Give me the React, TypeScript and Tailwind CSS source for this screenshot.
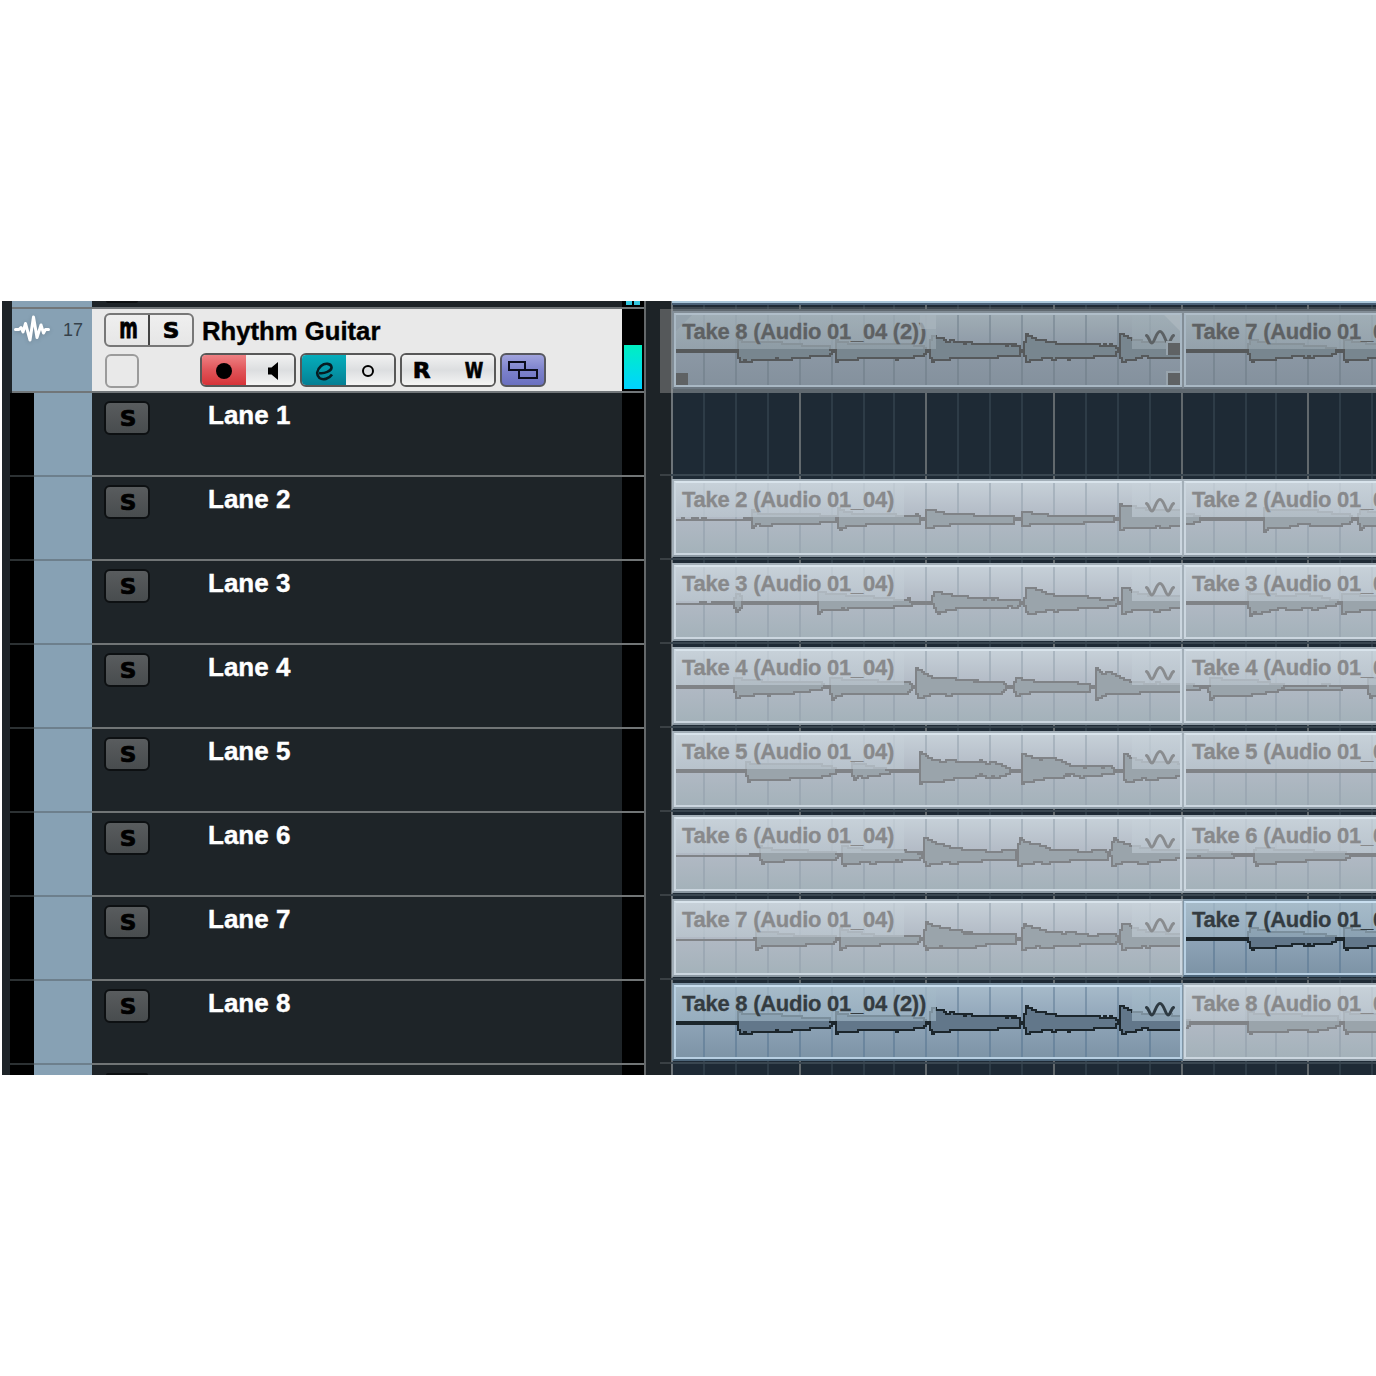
import React from 'react';
import clsx from 'clsx';

type Tone = 'muted' | 'active' | 'track';

interface Wave {
  top: string;
  bottom: string;
}

interface Clip {
  label: string;
  tone: Tone;
  wave: Wave;
}

interface LaneData {
  name: string;
  clips: Clip[];
}

const GRID = [
  704, 736, 768, 800, 832, 864, 894, 926, 958, 990, 1022, 1054, 1086, 1118, 1150, 1182, 1214, 1246, 1276, 1308, 1340,
  1372,
];
const MAJOR = [800, 926, 1054, 1182, 1308];

// Envelope points are "x,level" pairs, level is the distance from the centre line
const take2a: Wave = {
  top: '676,-1 680,-1 681,1 683,-1 690,-1 692,1 696,1 698,-1 704,1 706,-1 742,-1 744,1 750,1 752,8 756,6 786,5 818,4 834,3 835,1 837,1 838,10 842,8 850,6 886,5 904,3 914,3 916,5 918,3 920,1 924,1 926,9 934,9 935,7 943,7 944,5 973,5 974,3 1012,3 1013,1 1020,1 1022,7 1030,7 1031,5 1047,5 1048,3 1112,3 1113,1 1118,1 1120,15 1123,13 1132,13 1134,12 1150,9 1180,8',
  bottom:
    '676,1 750,1 752,9 754,7 757,5 762,7 769,7 771,5 818,5 819,3 834,3 835,1 836,1 838,9 840,11 842,9 846,7 864,7 865,5 918,5 920,1 924,1 926,9 932,9 933,7 948,7 949,5 1013,5 1014,1 1020,1 1022,7 1029,7 1030,5 1082,5 1083,3 1112,3 1113,1 1118,1 1120,11 1123,11 1124,9 1154,9 1156,7 1159,7 1161,9 1168,9 1170,7 1180,7',
};
const take2b: Wave = {
  top: '1186,5 1192,4 1196,3 1200,1 1263,1 1264,10 1270,9 1310,9 1330,6 1348,4 1351,1 1357,1 1359,9 1376,7',
  bottom:
    '1186,5 1190,5 1196,3 1200,1 1262,1 1264,13 1267,9 1288,9 1290,7 1296,7 1298,5 1309,5 1311,7 1339,7 1341,5 1349,5 1351,1 1357,1 1359,9 1361,11 1363,7 1376,7',
};
const take3a: Wave = {
  top: '676,-1 698,-1 700,1 703,1 705,-1 710,-1 714,1 732,1 735,8 738,8 741,5 742,1 816,1 818,11 830,9 860,7 884,5 903,3 907,3 909,5 910,1 930,1 934,11 940,11 943,9 949,9 951,7 965,7 967,5 981,5 984,3 988,5 992,3 995,5 999,3 1016,3 1020,1 1023,1 1026,15 1031,15 1043,11 1046,9 1060,7 1084,7 1088,5 1096,5 1100,3 1112,3 1115,7 1117,1 1120,1 1122,15 1128,15 1131,11 1146,8 1180,7',
  bottom:
    '676,1 733,1 735,9 738,7 741,4 742,1 816,1 818,11 822,7 840,7 842,5 845,7 847,5 885,5 900,3 909,3 911,1 932,1 935,7 937,11 941,9 950,7 960,5 1005,5 1007,3 1016,5 1020,1 1023,1 1026,9 1029,11 1042,9 1046,7 1052,7 1055,9 1058,7 1076,7 1079,5 1103,5 1112,3 1116,1 1120,1 1122,11 1128,9 1133,7 1150,7 1156,9 1162,7 1176,5 1180,3',
};
const take3b: Wave = {
  top: '1186,1 1247,1 1248,10 1274,8 1290,7 1300,9 1316,7 1334,3 1338,1 1340,1 1342,9 1376,7',
  bottom:
    '1186,1 1247,1 1250,13 1253,9 1258,11 1263,9 1274,7 1280,5 1290,7 1310,5 1314,7 1318,5 1333,3 1338,1 1340,1 1342,11 1346,9 1358,9 1360,7 1376,7',
};
const take4a: Wave = {
  top: '676,1 732,1 733,10 740,8 760,6 820,5 823,1 828,1 830,9 850,7 903,5 906,5 907,7 910,3 912,1 914,1 916,18 920,16 927,12 933,9 953,9 955,7 972,7 974,5 976,7 978,5 1003,5 1005,1 1013,1 1015,9 1020,9 1023,7 1032,7 1033,5 1076,5 1078,3 1088,3 1090,1 1094,1 1096,19 1099,15 1104,13 1108,15 1112,13 1116,11 1124,7 1132,5 1154,3 1156,5 1160,3 1180,3',
  bottom:
    '676,1 732,1 734,5 737,13 740,9 752,9 755,7 766,7 768,9 770,7 788,7 797,5 820,3 823,1 828,1 830,7 832,13 835,9 840,9 842,7 907,7 910,3 912,1 914,1 917,11 921,11 926,9 933,7 943,7 946,9 949,9 951,7 1000,7 1003,5 1005,1 1013,1 1015,9 1018,9 1020,7 1024,7 1033,5 1088,5 1089,1 1094,1 1096,13 1099,11 1104,9 1107,7 1139,7 1140,5 1180,5',
};
const take4b: Wave = {
  top: '1186,3 1199,1 1208,1 1210,9 1233,7 1256,6 1276,3 1290,1 1320,1 1321,3 1323,1 1328,3 1330,1 1367,1 1368,9 1376,8',
  bottom:
    '1186,3 1198,3 1201,1 1207,1 1210,13 1214,9 1249,9 1251,7 1262,7 1266,5 1274,5 1279,3 1282,1 1284,3 1340,3 1342,1 1367,1 1369,11 1372,9 1376,9',
};
const take5a: Wave = {
  top: '676,1 730,1 731,-1 733,1 744,1 746,9 752,7 783,6 820,6 830,4 837,1 851,1 852,8 860,7 873,4 890,1 918,1 920,19 923,17 928,13 933,11 943,9 948,11 952,11 956,9 976,8 980,11 986,7 992,9 997,7 1003,5 1010,1 1020,1 1022,17 1026,15 1036,13 1040,11 1043,13 1050,13 1058,11 1066,7 1071,5 1082,5 1084,3 1087,5 1099,5 1102,3 1106,5 1110,5 1112,3 1114,1 1122,1 1124,17 1128,15 1131,13 1141,10 1173,9 1180,7',
  bottom:
    '676,1 744,1 746,5 748,11 751,9 787,9 789,7 815,7 827,5 837,1 851,1 853,9 856,7 859,5 862,7 873,5 886,3 890,1 918,1 920,13 923,11 933,11 952,9 954,7 973,7 980,3 984,5 988,7 992,5 996,7 1003,5 1010,1 1020,1 1022,13 1025,11 1040,9 1044,7 1062,7 1064,5 1066,3 1068,5 1070,3 1078,5 1081,7 1083,5 1099,5 1101,3 1112,3 1114,1 1122,1 1124,9 1128,11 1139,9 1144,7 1147,9 1156,9 1159,7 1173,7 1180,3',
};
const take5b: Wave = { top: '1186,1 1376,1', bottom: '1186,1 1376,1' };
const take6a: Wave = {
  top: '676,-1 748,-1 750,1 752,-1 755,1 758,1 760,8 770,6 783,5 832,3 836,1 840,1 841,10 847,8 860,6 870,5 904,5 906,3 911,3 913,1 915,3 918,1 920,3 922,1 924,17 930,15 937,11 948,9 950,7 960,7 962,5 983,5 985,3 1001,3 1003,5 1014,5 1016,1 1019,17 1024,13 1033,11 1043,9 1050,5 1076,5 1077,3 1090,3 1091,5 1105,5 1108,1 1110,5 1113,17 1119,13 1126,11 1132,9 1150,6 1180,5',
  bottom:
    '676,1 758,1 760,5 761,11 764,7 782,7 783,5 831,5 833,3 835,5 838,1 840,1 842,9 843,11 846,9 857,9 860,7 868,7 872,9 877,7 893,7 896,5 899,7 902,5 919,5 922,1 924,7 926,11 930,9 940,9 943,7 954,9 960,7 980,7 981,5 1014,5 1016,1 1018,11 1023,9 1030,9 1034,7 1048,9 1050,7 1068,7 1069,5 1106,5 1108,1 1110,1 1112,11 1117,9 1123,7 1134,7 1139,9 1145,9 1147,7 1158,7 1160,5 1169,5 1180,3',
};
const take6b: Wave = {
  top: '1186,5 1206,4 1226,3 1236,1 1253,1 1255,8 1263,7 1283,5 1344,3 1347,1 1376,1',
  bottom:
    '1186,3 1196,3 1198,1 1200,3 1229,3 1235,1 1253,1 1255,11 1258,9 1273,9 1275,7 1303,7 1305,5 1344,5 1347,3 1349,1 1376,1',
};
const take7a: Wave = {
  top: '676,-1 752,-1 753,1 755,1 756,8 776,6 793,4 833,3 835,1 839,1 840,10 847,8 860,6 873,4 904,3 917,3 919,1 923,1 925,17 930,14 942,11 956,9 960,9 962,7 964,5 966,7 968,5 970,7 973,5 1015,5 1016,1 1020,1 1023,15 1028,13 1039,10 1049,7 1060,7 1062,5 1069,7 1079,5 1086,5 1089,3 1096,3 1098,5 1115,5 1117,1 1119,1 1121,15 1127,15 1132,11 1136,10 1150,7 1180,5',
  bottom:
    '676,1 754,1 756,11 759,9 762,7 805,7 806,5 833,5 835,1 838,1 840,11 843,9 846,7 878,7 879,5 917,5 919,1 923,1 925,13 928,9 938,9 941,7 943,9 973,9 975,7 983,7 985,5 1015,5 1016,1 1020,1 1022,11 1026,9 1034,9 1037,7 1040,9 1052,9 1055,7 1078,7 1079,5 1115,5 1117,1 1119,1 1122,11 1126,9 1139,9 1141,7 1148,9 1151,7 1180,7',
};
const take7b: Wave = {
  top: '1186,1 1247,1 1249,12 1256,10 1261,9 1274,7 1303,6 1318,5 1333,3 1337,1 1342,1 1344,12 1353,9 1376,7',
  bottom:
    '1186,1 1247,1 1250,9 1252,11 1255,9 1273,9 1275,7 1290,7 1292,5 1301,5 1304,7 1308,5 1312,7 1315,5 1329,5 1334,3 1337,1 1342,1 1345,13 1348,9 1366,9 1368,7 1376,7',
};
const take8a: Wave = {
  top: '676,1 737,1 738,11 744,9 780,8 800,6 828,5 830,1 835,1 836,10 847,8 880,7 912,6 921,5 925,1 928,1 931,15 935,15 937,12 943,12 947,9 951,11 955,9 961,9 963,7 969,9 972,7 1003,7 1005,5 1009,7 1011,5 1014,7 1016,5 1018,5 1020,1 1023,1 1025,17 1030,15 1033,13 1038,11 1053,9 1055,7 1065,7 1067,5 1069,7 1098,7 1101,5 1104,7 1107,5 1110,7 1112,5 1115,5 1117,1 1118,1 1120,17 1125,15 1131,12 1140,10 1163,9 1180,7',
  bottom:
    '676,1 737,1 738,7 741,13 743,9 748,11 752,9 773,9 776,7 780,9 789,9 791,7 807,7 809,5 828,5 831,1 834,1 836,11 839,9 855,9 857,7 894,7 896,9 898,7 912,7 914,5 923,5 925,1 928,1 931,11 935,9 948,9 949,7 997,7 998,5 1018,5 1020,1 1023,1 1026,11 1030,9 1040,9 1042,7 1050,7 1052,9 1056,7 1066,7 1068,9 1071,7 1092,7 1093,5 1114,5 1116,1 1118,1 1122,11 1126,9 1133,9 1135,7 1146,5 1150,7 1180,7',
};
const take8b: Wave = {
  top: '1186,3 1190,1 1246,1 1248,12 1254,9 1300,8 1336,6 1339,1 1342,1 1344,12 1352,9 1376,8',
  bottom:
    '1186,5 1190,1 1246,1 1248,9 1250,11 1253,9 1285,9 1287,7 1306,7 1308,9 1314,9 1320,7 1332,5 1338,3 1340,1 1342,1 1345,11 1349,9 1376,9',
};

const lanes: LaneData[] = [
  { name: 'Lane 1', clips: [] },
  {
    name: 'Lane 2',
    clips: [
      { label: 'Take 2 (Audio 01_04)', tone: 'muted', wave: take2a },
      { label: 'Take 2 (Audio 01_04)', tone: 'muted', wave: take2b },
    ],
  },
  {
    name: 'Lane 3',
    clips: [
      { label: 'Take 3 (Audio 01_04)', tone: 'muted', wave: take3a },
      { label: 'Take 3 (Audio 01_04)', tone: 'muted', wave: take3b },
    ],
  },
  {
    name: 'Lane 4',
    clips: [
      { label: 'Take 4 (Audio 01_04)', tone: 'muted', wave: take4a },
      { label: 'Take 4 (Audio 01_04)', tone: 'muted', wave: take4b },
    ],
  },
  {
    name: 'Lane 5',
    clips: [
      { label: 'Take 5 (Audio 01_04)', tone: 'muted', wave: take5a },
      { label: 'Take 5 (Audio 01_04)', tone: 'muted', wave: take5b },
    ],
  },
  {
    name: 'Lane 6',
    clips: [
      { label: 'Take 6 (Audio 01_04)', tone: 'muted', wave: take6a },
      { label: 'Take 6 (Audio 01_04)', tone: 'muted', wave: take6b },
    ],
  },
  {
    name: 'Lane 7',
    clips: [
      { label: 'Take 7 (Audio 01_04)', tone: 'muted', wave: take7a },
      { label: 'Take 7 (Audio 01_04)', tone: 'active', wave: take7b },
    ],
  },
  {
    name: 'Lane 8',
    clips: [
      { label: 'Take 8 (Audio 01_04 (2))', tone: 'active', wave: take8a },
      { label: 'Take 8 (Audio 01_04)', tone: 'muted', wave: take8b },
    ],
  },
];

const trackClips: Clip[] = [
  { label: 'Take 8 (Audio 01_04 (2))', tone: 'track', wave: take8a },
  { label: 'Take 7 (Audio 01_04)', tone: 'track', wave: take7b },
];

const waveColors = {
  muted: { fill: '#9aa4ab', line: '#808387', grid: '#98a5b0', icon: '#898c8f' },
  active: { fill: '#62778a', line: '#1c262c', grid: '#65819a', icon: '#2e3a42' },
  track: { fill: '#78868f', line: '#56595b', grid: '#75838f', icon: '#5c6164' },
};

const clipStyles = {
  muted: {
    outer: 'border-[#a3afb8] border-b-[#8b98a2]',
    inner: 'border-[#cbd6df] border-t-[#d9e4ec] bg-linear-to-b from-[#c6d0d8] via-[#b1b9c4] to-[#a4b2ba]',
    shade: 'bg-linear-to-b from-[#c7d1d9]/75 to-[#bac5ce]/75',
    text: 'text-[#88898b]',
  },
  active: {
    outer: 'border-[#7f95a6] border-b-[#4d667a]',
    inner: 'border-[#b7cfe2] border-t-[#c9dff0] bg-linear-to-b from-[#a6bac9] via-[#8fa4b8] to-[#7d94a6]',
    shade: 'bg-linear-to-b from-[#a6bbc9]/75 to-[#99b0c0]/75',
    text: 'text-[#343c41]',
  },
  track: {
    outer: 'border-[#828d96] border-b-[#6b7680]',
    inner: 'border-[#a9b8c4] border-t-[#b0bec9] bg-linear-to-b from-[#a0adb5] via-[#8c98a5] to-[#84919d]',
    shade: 'bg-linear-to-b from-[#a0aeb6]/75 to-[#96a4ad]/75',
    text: 'text-[#5e6163]',
  },
};

const envelope = (points: string, sign: number) => {
  const pts = points.split(' ').map((p) => p.split(',').map(Number));
  const out: string[] = [];
  let i = 0;
  const last = pts[pts.length - 1][0];
  for (let x = pts[0][0]; x < last; x += 2) {
    while (i < pts.length - 2 && pts[i + 1][0] <= x) i++;
    const [x0, y0] = pts[i];
    const [x1, y1] = pts[i + 1];
    const v = y0 + ((y1 - y0) * (x - x0)) / (x1 - x0);
    const y = sign * (2 * Math.round((v - 1) / 2) + 1);
    out.push(`${x},${y}`, `${x + 2},${y}`);
  }
  return out;
};

const Waveform: React.FC<{ wave: Wave; tone: Tone; start: number; width: number }> = ({ wave, tone, start, width }) => {
  const c = waveColors[tone];
  const top = envelope(wave.top, -1);
  const bottom = envelope(wave.bottom, 1);
  return (
    <svg
      className="absolute top-0 left-0"
      width={width}
      height={70}
      viewBox={`${start} -36 ${width} 70`}
      shapeRendering="crispEdges"
    >
      {GRID.map((x) => (
        <g key={x} fill={c.grid}>
          <rect x={x - 1} y={-36} width={2} height={36} opacity={0.6} />
          <rect x={x - 1} y={0} width={2} height={34} opacity={0.8} />
        </g>
      ))}
      <polygon points={[...top, ...bottom.slice().reverse()].join(' ')} fill={c.fill} />
      <polyline points={top.join(' ')} fill="none" stroke={c.line} strokeWidth={2} />
      <polyline points={bottom.join(' ')} fill="none" stroke={c.line} strokeWidth={2} />
    </svg>
  );
};

const ClipView: React.FC<{ clip: Clip; first: boolean }> = ({ clip, first }) => {
  const s = clipStyles[clip.tone];
  return (
    <div
      className={clsx(
        'relative h-[78px] shrink-0 border-y-2 overflow-hidden',
        first ? 'ml-px w-[511px] border-l-2 border-r' : 'w-[193px] border-l',
        s.outer
      )}
    >
      <div className={clsx('relative h-[74px] border-y-2 border-l-2', first && 'border-r-2', s.inner)}>
        <Waveform wave={clip.wave} tone={clip.tone} start={first ? 676 : 1186} width={first ? 504 : 190} />
        <div
          className={clsx(
            'relative h-[34px] pl-[6px] pr-[10px] w-max whitespace-nowrap text-[22px] leading-[33px] font-bold tracking-[-0.26px] [-webkit-text-stroke:0.3px_currentColor]',
            s.shade,
            s.text
          )}
        >
          {clip.label}
        </div>
        {first && (
          <>
            <div className={clsx('absolute top-0 right-0 h-[34px] w-12', s.shade)} />
            <svg className="absolute top-[13px] right-[5px]" width="30" height="20" viewBox="0 0 30 20" fill="none">
              <path
                d="M1.500 7.500C4 8.500 4.500 15 7 15s4-11.500 8-11.500S20.500 15 23 15s3-6.500 5.500-7.500"
                stroke={waveColors[clip.tone].icon}
                strokeWidth="3"
                strokeLinecap="round"
              />
            </svg>
          </>
        )}
        {first && clip.tone === 'track' && (
          <svg className="absolute top-0 left-0" width="504" height="70" viewBox="0 0 504 70">
            <path d="M0 0h16L0 16z" fill="#8f9da8" opacity=".6" />
            <path d="M488 0h16v16z" fill="#b3bcc3" opacity=".6" />
            <rect x="244" y="0" width="16" height="14" fill="#a9b5bd" opacity=".7" />
            <path d="M490 26h14v14h-14zM490 56h14v14h-14z" fill="#98a4ad" />
            <path d="M492 28h12v12h-12zM492 58h12v12h-12zM0 58h12v12H0z" fill="#5f6264" />
          </svg>
        )}
      </div>
    </div>
  );
};

const GridLines = () => (
  <svg className="absolute inset-0" width="705" height="84" viewBox="671 0 705 84" shapeRendering="crispEdges">
    {GRID.map((x) => (
      <rect key={x} x={x - 1} y={0} width={2} height={84} fill={MAJOR.includes(x) ? '#62696d' : '#2e3c47'} />
    ))}
    <rect x={671} y={0} width={2} height={84} fill="#6d7479" />
  </svg>
);

const TimelineLane: React.FC<{ clips: Clip[]; short?: boolean }> = ({ clips, short }) => (
  <div className={clsx('flex shrink-0', short ? 'h-[83px]' : 'h-[84px]')}>
    <div className="w-[14px]" />
    <div className="w-[11px] border-b-2 border-[#3a4044]" />
    <div className="relative w-[705px] overflow-hidden border-b-2 border-[#394650] bg-[#1e2a35]">
      <GridLines />
      <div className="relative flex pt-[3px]">
        {clips.map((clip, i) => (
          <ClipView key={i} clip={clip} first={i === 0} />
        ))}
      </div>
    </div>
  </div>
);

const Separator = () => (
  <div className="flex h-[2px] shrink-0">
    <div className="w-2" />
    <div className="w-6 bg-[#2c3133]" />
    <div className="w-[58px] bg-[#6d7f8c]" />
    <div className="flex-1 bg-[#717576]" />
  </div>
);

const glyphShapes = {
  normal: 'scale-x-110',
  narrow: 'scale-x-[.8]',
  tall: 'origin-[50%_85%] scale-x-[.85] scale-y-[1.32]',
};

const Glyph: React.FC<{ children: string; shape?: keyof typeof glyphShapes }> = ({ children, shape = 'normal' }) => (
  <span
    className={clsx(
      "inline-block translate-x-[0.5px] translate-y-px font-['DejaVu_Sans'] text-[21px] leading-none font-bold text-black [-webkit-text-stroke:0.7px_black]",
      glyphShapes[shape]
    )}
  >
    {children}
  </span>
);

const SoloButton = () => (
  <div className="flex h-[34px] w-[46px] items-center justify-center rounded-md border-2 border-[#0d1012] bg-linear-to-b from-[#595c5e] to-[#484c4e] pl-px">
    <Glyph>S</Glyph>
  </div>
);

const LaneHeader: React.FC<{ name: string }> = ({ name }) => (
  <>
    <div className="flex h-[82px] shrink-0">
      <div className="w-2" />
      <div className="w-6 bg-black" />
      <div className="w-[58px] bg-[#87a1b4]" />
      <div className="flex w-[530px] items-start pt-2 pl-3">
        <SoloButton />
        <span className="ml-[58px] text-[26px] leading-[28px] font-bold text-white [-webkit-text-stroke:0.4px_white]">
          {name}
        </span>
      </div>
      <div className="w-[22px] bg-black" />
    </div>
    <Separator />
  </>
);

const pair = 'flex h-[34px] w-24 overflow-hidden rounded-md border-2 border-[#585858]';
const plain = 'flex flex-1 items-center justify-center bg-linear-to-b from-[#f2f2f2] via-[#dcdee0] to-[#f4f4f4] pt-[2px]';

const TrackHeader = () => (
  <div className="flex h-[82px] shrink-0">
    <div className="w-[10px]" />
    <div className="relative w-20 bg-[#87a1b4]">
      <svg className="absolute top-[5px] left-[2px] drop-shadow-sm" width="36" height="29" viewBox="0 0 36 29" fill="none">
        <path
          d="M1.500 15.500H5l2-2 2 4.500 2.500-8.500L16 26l3.500-23L23 23.500 27 11l2.500 8 2-3.500h3"
          stroke="#fff"
          strokeWidth="3"
          strokeLinejoin="round"
          strokeLinecap="round"
        />
      </svg>
      <span className="absolute top-[10px] right-[9px] text-[18px] leading-[22px] text-[#35414b]">17</span>
    </div>
    <div className="w-[530px] bg-[#e9e9e9] pl-3">
      <div className="flex h-11 pt-1">
        <div className="flex h-[34px] w-[90px] rounded-md border-2 border-[#777] bg-linear-to-b from-[#efefef] to-[#e6e6e6]">
          <div className="flex w-11 items-center justify-center border-r-2 border-[#444] pl-px">
            <Glyph shape="tall">m</Glyph>
          </div>
          <div className="flex flex-1 items-center justify-center">
            <Glyph>S</Glyph>
          </div>
        </div>
        <span className="ml-2 text-[25.700px] leading-9 font-bold text-black [-webkit-text-stroke:0.4px_black]">
          Rhythm Guitar
        </span>
      </div>
      <div className="flex gap-1">
        <div className="mt-px ml-px mr-[57px] h-[34px] w-[34px] rounded-md border-2 border-[#9b9b9b]" />
        <div className={pair}>
          <div className="flex w-11 items-center justify-center bg-linear-to-b from-[#ee8083] via-[#e05459] to-[#d63238] pt-[2px]">
            <span className="h-[16px] w-[16px] rounded-full bg-black" />
          </div>
          <div className={plain}>
            <svg width="12" height="20" viewBox="0 0 12 20" className="ml-[6px]">
              <path d="M1 6.500h3.500L11 1v18L4.500 13.500H1z" />
            </svg>
          </div>
        </div>
        <div className={pair}>
          <div className="flex w-11 items-center justify-center bg-linear-to-b from-[#06adbb] via-[#0597a8] to-[#057f94] pt-[2px]">
            <svg width="19" height="19" viewBox="0 0 19 19" fill="none" stroke="#061c22" strokeWidth="2.600">
              <path d="M4 11C9 12 17 9 16.500 5.200 16 1.200 10 .700 6 4 1.500 8 1 13 4.500 16c3.500 2.500 9.500 1 12.500-3.500" />
            </svg>
          </div>
          <div className={plain}>
            <span className="mr-[4px] h-3 w-3 rounded-full border-2 border-black" />
          </div>
        </div>
        <div className={pair}>
          <div className="flex w-full items-center justify-between bg-linear-to-b from-[#f2f2f2] via-[#dcdee0] to-[#f4f4f4] pr-[9px] pl-[11px]">
            <Glyph>R</Glyph>
            <Glyph shape="narrow">W</Glyph>
          </div>
        </div>
        <div className="flex h-[34px] w-[46px] items-center justify-center rounded-md border-2 border-[#57585f] bg-linear-to-b from-[#a0a3dd] via-[#7d82cc] to-[#6a70c0]">
          <svg width="32" height="20" viewBox="0 0 32 20" fill="none" stroke="#0b0c1c" strokeWidth="2">
            <path d="M2 2h16v8H2zM12 10h18v8H12z" />
          </svg>
        </div>
      </div>
    </div>
    <div className="flex w-[22px] flex-col justify-end bg-black px-[2px] pb-[2px]">
      <div className="h-[44px] bg-linear-to-b from-[#00efc0] to-[#00d2ff]" />
    </div>
  </div>
);

const TrackList = () => (
  <div className="flex w-[644px] shrink-0 flex-col overflow-hidden border-r-2 border-[#64686a] bg-[#1e2428]">
    <div className="flex h-[6px] shrink-0">
      <div className="w-[10px]" />
      <div className="w-20 bg-[#87a1b4]" />
      <div className="w-[530px] pl-[14px]">
        <div className="h-[2px] w-8 rounded-b bg-[#0d1012]" />
      </div>
      <div className="flex w-[22px] gap-[2px] bg-black pl-1">
        <div className="h-1 w-[6px] bg-[#35c8e0]" />
        <div className="h-1 w-[6px] bg-[#35c8e0]" />
      </div>
    </div>
    <div className="ml-[10px] h-[2px] shrink-0 bg-[#717679]" />
    <TrackHeader />
    <div className="ml-[10px] h-[2px] shrink-0 bg-[#717679]" />
    {lanes.map((lane) => (
      <LaneHeader key={lane.name} name={lane.name} />
    ))}
    <div className="flex flex-1">
      <div className="w-2" />
      <div className="w-6 bg-black" />
      <div className="w-[58px] bg-[#87a1b4]" />
      <div className="flex w-[530px] items-end pl-[14px]">
        <div className="h-[2px] w-[42px] rounded-t bg-[#0d1012]" />
      </div>
      <div className="w-[22px] bg-black" />
    </div>
  </div>
);

const Timeline = () => (
  <div className="flex w-[730px] flex-col overflow-hidden bg-[#1d2327]">
    <div className="relative ml-[25px] h-[8px] shrink-0 overflow-hidden bg-[#1e2a35]">
      <GridLines />
      <div className="relative ml-px h-1 border-t-2 border-[#a9c6d9] bg-[#4a6178]" />
      <div className="relative mt-[2px] h-[2px] bg-[#6a7175]/40" />
    </div>
    <div className="ml-[14px] flex h-[84px] shrink-0 bg-[#55585a]">
      <div className="w-[11px]" />
      <div className="w-[705px] border-l-2 border-[#858a8d] bg-[#5f686f] pt-[2px]">
        <div className="-ml-[2px] flex">
          {trackClips.map((clip, i) => (
            <ClipView key={i} clip={clip} first={i === 0} />
          ))}
        </div>
      </div>
    </div>
    {lanes.map((lane, i) => (
      <TimelineLane key={lane.name} clips={lane.clips} short={i === 0} />
    ))}
    <div className="relative ml-[25px] flex-1 overflow-hidden bg-[#1e2a35]">
      <GridLines />
    </div>
  </div>
);

export default function App() {
  return (
    <div className="h-[1376px] w-[1376px] overflow-hidden bg-white pt-[301px] pl-[2px] font-['Liberation_Sans',Arial,sans-serif]">
      <div className="flex h-[774px] w-[1374px] overflow-hidden">
        <TrackList />
        <Timeline />
      </div>
    </div>
  );
}
